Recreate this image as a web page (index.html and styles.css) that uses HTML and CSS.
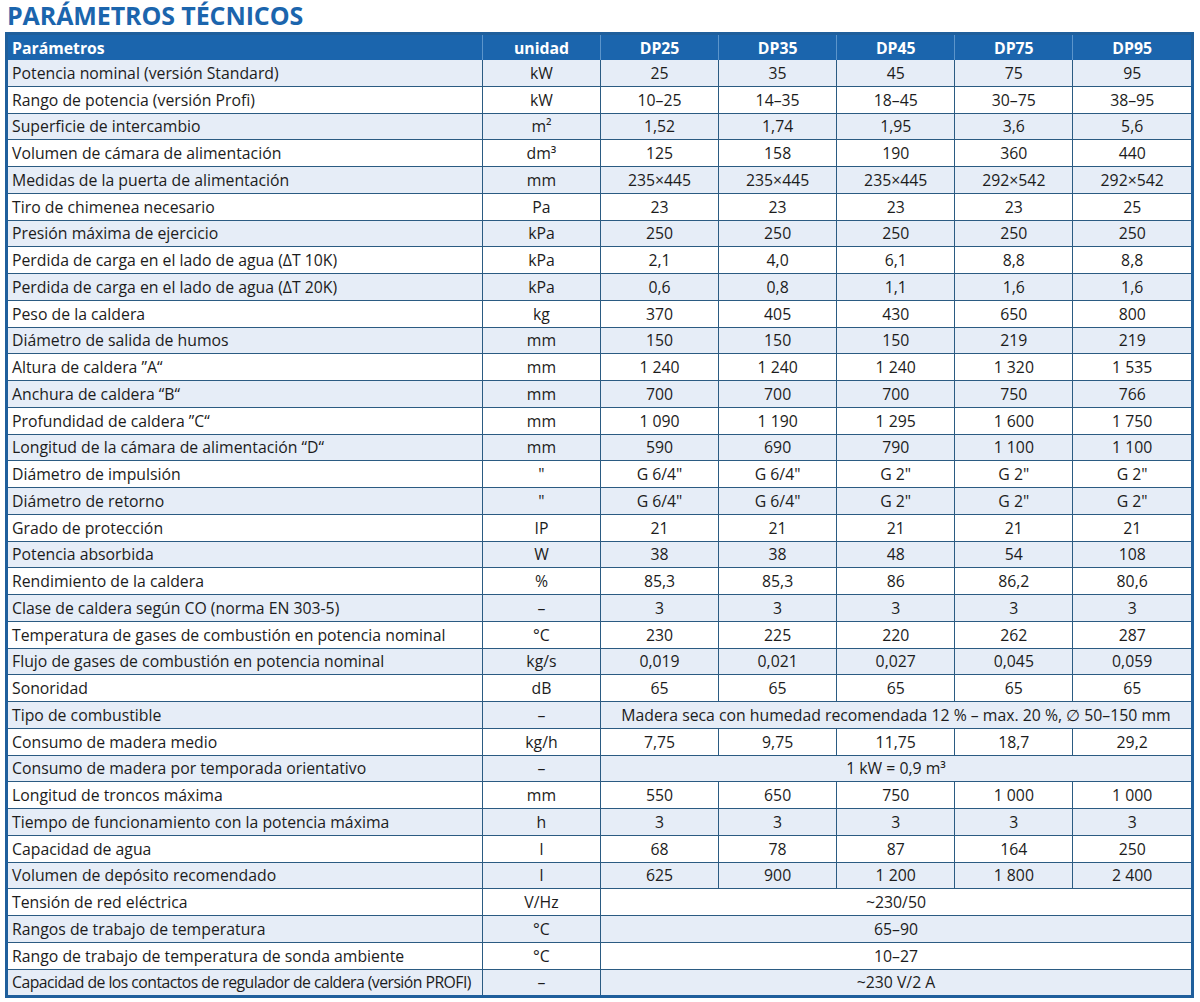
FILE: index.html
```html
<!DOCTYPE html>
<html lang="es">
<head>
<meta charset="utf-8">
<title>Parámetros técnicos</title>
<link rel="stylesheet" href="styles.css">
</head>
<body>
<h1 class="title">PARÁMETROS TÉCNICOS</h1>
<div class="frame">
<table class="spec">
<colgroup>
<col class="c-name"><col class="c-unit"><col class="c-m"><col class="c-m"><col class="c-m"><col class="c-m"><col class="c-m">
</colgroup>
<thead>
<tr><th class="name">Parámetros</th><th>unidad</th><th>DP25</th><th>DP35</th><th>DP45</th><th>DP75</th><th>DP95</th></tr>
</thead>
<tbody>
<tr><td class="name">Potencia nominal (versión Standard)</td><td>kW</td><td>25</td><td>35</td><td>45</td><td>75</td><td>95</td></tr>
<tr><td class="name">Rango de potencia (versión Profi)</td><td>kW</td><td>10–25</td><td>14–35</td><td>18–45</td><td>30–75</td><td>38–95</td></tr>
<tr><td class="name">Superficie de intercambio</td><td>m²</td><td>1,52</td><td>1,74</td><td>1,95</td><td>3,6</td><td>5,6</td></tr>
<tr><td class="name">Volumen de cámara de alimentación</td><td>dm³</td><td>125</td><td>158</td><td>190</td><td>360</td><td>440</td></tr>
<tr><td class="name">Medidas de la puerta de alimentación</td><td>mm</td><td>235×445</td><td>235×445</td><td>235×445</td><td>292×542</td><td>292×542</td></tr>
<tr><td class="name">Tiro de chimenea necesario</td><td>Pa</td><td>23</td><td>23</td><td>23</td><td>23</td><td>25</td></tr>
<tr><td class="name">Presión máxima de ejercicio</td><td>kPa</td><td>250</td><td>250</td><td>250</td><td>250</td><td>250</td></tr>
<tr><td class="name">Perdida de carga en el lado de agua (ΔT 10K)</td><td>kPa</td><td>2,1</td><td>4,0</td><td>6,1</td><td>8,8</td><td>8,8</td></tr>
<tr><td class="name">Perdida de carga en el lado de agua (ΔT 20K)</td><td>kPa</td><td>0,6</td><td>0,8</td><td>1,1</td><td>1,6</td><td>1,6</td></tr>
<tr><td class="name">Peso de la caldera</td><td>kg</td><td>370</td><td>405</td><td>430</td><td>650</td><td>800</td></tr>
<tr><td class="name">Diámetro de salida de humos</td><td>mm</td><td>150</td><td>150</td><td>150</td><td>219</td><td>219</td></tr>
<tr><td class="name">Altura de caldera ”A“</td><td>mm</td><td>1 240</td><td>1 240</td><td>1 240</td><td>1 320</td><td>1 535</td></tr>
<tr><td class="name">Anchura de caldera “B“</td><td>mm</td><td>700</td><td>700</td><td>700</td><td>750</td><td>766</td></tr>
<tr><td class="name">Profundidad de caldera ”C“</td><td>mm</td><td>1 090</td><td>1 190</td><td>1 295</td><td>1 600</td><td>1 750</td></tr>
<tr><td class="name">Longitud de la cámara de alimentación “D“</td><td>mm</td><td>590</td><td>690</td><td>790</td><td>1 100</td><td>1 100</td></tr>
<tr><td class="name">Diámetro de impulsión</td><td>"</td><td>G 6/4"</td><td>G 6/4"</td><td>G 2"</td><td>G 2"</td><td>G 2"</td></tr>
<tr><td class="name">Diámetro de retorno</td><td>"</td><td>G 6/4"</td><td>G 6/4"</td><td>G 2"</td><td>G 2"</td><td>G 2"</td></tr>
<tr><td class="name">Grado de protección</td><td>IP</td><td>21</td><td>21</td><td>21</td><td>21</td><td>21</td></tr>
<tr><td class="name">Potencia absorbida</td><td>W</td><td>38</td><td>38</td><td>48</td><td>54</td><td>108</td></tr>
<tr><td class="name">Rendimiento de la caldera</td><td>%</td><td>85,3</td><td>85,3</td><td>86</td><td>86,2</td><td>80,6</td></tr>
<tr><td class="name">Clase de caldera según CO (norma EN 303-5)</td><td>–</td><td>3</td><td>3</td><td>3</td><td>3</td><td>3</td></tr>
<tr><td class="name">Temperatura de gases de combustión en potencia nominal</td><td>°C</td><td>230</td><td>225</td><td>220</td><td>262</td><td>287</td></tr>
<tr><td class="name">Flujo de gases de combustión en potencia nominal</td><td>kg/s</td><td>0,019</td><td>0,021</td><td>0,027</td><td>0,045</td><td>0,059</td></tr>
<tr><td class="name">Sonoridad</td><td>dB</td><td>65</td><td>65</td><td>65</td><td>65</td><td>65</td></tr>
<tr><td class="name">Tipo de combustible</td><td>–</td><td colspan="5">Madera seca con humedad recomendada 12 % – max. 20 %, ∅ 50–150 mm</td></tr>
<tr><td class="name">Consumo de madera medio</td><td>kg/h</td><td>7,75</td><td>9,75</td><td>11,75</td><td>18,7</td><td>29,2</td></tr>
<tr><td class="name">Consumo de madera por temporada orientativo</td><td>–</td><td colspan="5">1 kW = 0,9 m³</td></tr>
<tr><td class="name">Longitud de troncos máxima</td><td>mm</td><td>550</td><td>650</td><td>750</td><td>1 000</td><td>1 000</td></tr>
<tr><td class="name">Tiempo de funcionamiento con la potencia máxima</td><td>h</td><td>3</td><td>3</td><td>3</td><td>3</td><td>3</td></tr>
<tr><td class="name">Capacidad de agua</td><td>l</td><td>68</td><td>78</td><td>87</td><td>164</td><td>250</td></tr>
<tr><td class="name">Volumen de depósito recomendado</td><td>l</td><td>625</td><td>900</td><td>1 200</td><td>1 800</td><td>2 400</td></tr>
<tr><td class="name">Tensión de red eléctrica</td><td>V/Hz</td><td colspan="5">~230/50</td></tr>
<tr><td class="name">Rangos de trabajo de temperatura</td><td>°C</td><td colspan="5">65–90</td></tr>
<tr><td class="name">Rango de trabajo de temperatura de sonda ambiente</td><td>°C</td><td colspan="5">10–27</td></tr>
<tr><td class="name tight">Capacidad de los contactos de regulador de caldera (versión PROFI)</td><td>–</td><td colspan="5">~230 V/2 A</td></tr>
</tbody>
</table>
</div>
</body>
</html>
```

FILE: styles.css
```css
html, body {
  margin: 0;
  padding: 0;
  background: #ffffff;
}
body {
  font-family: "Open Sans", "Noto Sans", sans-serif;
  color: #1c1c1c;
}
.title {
  margin: 0;
  padding: 1px 0 0 7px;
  height: 30px;
  box-sizing: border-box;
  font-size: 25px;
  line-height: 28px;
  font-weight: 700;
  color: #1b65ad;
  letter-spacing: -0.1px;
  white-space: nowrap;
}
.frame {
  margin-left: 5px;
  margin-top: 2px;
  width: 1189px;
  box-sizing: border-box;
  border: 3px solid #1f5f9c;
  background: #fff;
}
.spec {
  width: 100%;
  border-collapse: collapse;
  table-layout: fixed;
  font-size: 15.8px;
}
.c-name { width: 474px; }
.c-unit { width: 118px; }
.c-m { width: 118px; }
.spec th {
  height: 25px;
  background: #1b65ad;
  color: #fff;
  font-weight: 700;
  text-align: center;
  padding: 0;
  line-height: 20px;
  border-left: 1px solid #5c95cb;
}
.spec th:first-child { border-left: none; }
.spec td {
  height: 25.75px;
  padding: 0;
  line-height: 20px;
  text-align: center;
  border: 1px solid #2b5b82;
  white-space: nowrap;
}
.spec tbody tr:first-child td { border-top: none; }
.spec tbody tr:last-child td { border-bottom: none; }
.spec td:first-child { border-left: none; }
.spec td:last-child { border-right: none; }
.spec tbody tr:nth-child(odd) td { background: #e6edf7; }
.spec .name {
  text-align: left;
  padding-left: 4px;
}
.spec .tight {
  letter-spacing: -0.55px;
}
```
